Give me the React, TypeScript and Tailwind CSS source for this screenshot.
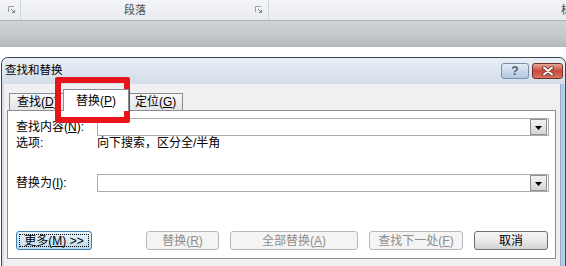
import type { ReactNode } from 'react';

function K({ children }: { children: ReactNode }) {
  return <span className="underline underline-offset-1">{children}</span>;
}

function Launcher() {
  return (
    <svg width="8" height="8" viewBox="0 0 8 8" className="block">
      <path d="M0.5 6V0.5H6" fill="none" stroke="#9a9ea3" />
      <path d="M3 3L6.5 6.5M4 6.5H6.5V4" fill="none" stroke="#7d8186" />
    </svg>
  );
}

function Combo() {
  return (
    <div className="flex-1 h-[18px] border border-[#a9abb0] bg-white flex justify-end items-center pr-px">
      <div className="w-[17px] h-[16px] border border-[#8e8f92] bg-gradient-to-b from-[#f3f3f3] to-[#d6d6d6] flex items-center justify-center">
        <svg width="7" height="4" viewBox="0 0 7 4" className="mt-[2px]">
          <path d="M0 0H7L3.5 4Z" fill="#000" />
        </svg>
      </div>
    </div>
  );
}

function Btn({
  w,
  ml = '',
  disabled,
  children,
}: {
  w: string;
  ml?: string;
  disabled?: boolean;
  children: ReactNode;
}) {
  return (
    <div
      className={`${w} ${ml} h-[19px] rounded-[3px] border flex items-center justify-center text-[12px] leading-none ${
        disabled
          ? 'border-[#b5b9bc] bg-[#f4f4f4] text-[#8d8d8d]'
          : 'border-[#707070] bg-gradient-to-b from-[#f6f6f6] via-[#e9e9e9] to-[#d3d3d3] text-black'
      }`}
    >
      {children}
    </div>
  );
}

export default function App() {
  return (
    <div className="w-[566px] h-[266px] overflow-hidden relative bg-white font-['Liberation_Sans','Noto_Sans_CJK_SC',sans-serif] text-[12px] text-black">
      {/* ribbon strip */}
      <div className="h-[21px] flex bg-gradient-to-b from-[#f3f5f8] to-[#e8ebef] border-b border-[#b1b5ba]">
        <div className="w-[21px] border-r border-[#d2d5d9] pl-[8px] pt-[6px]">
          <Launcher />
        </div>
        <div className="w-[248px] border-r border-[#d2d5d9] flex items-center pl-[103px] pr-[5px] text-[11px] text-[#4c4c4c]">
          <span className="flex-1">段落</span>
          <Launcher />
        </div>
        <div className="flex-1 overflow-hidden pl-[292px] text-[11px] text-[#4c4c4c] leading-[20px] whitespace-nowrap">
          标
        </div>
      </div>
      <div className="h-[26px] bg-gradient-to-b from-[#ced2d7] via-[#c6cacf] to-[#b4b8bd]" />
      <div className="h-[10px]" />

      {/* dialog */}
      <div className="ml-px w-[565px] h-[209px] border border-b-0 border-[#3d4753] rounded-t-[7px] bg-[#d6e1ec] flex flex-col overflow-hidden">
        <div className="h-[26px] flex items-start pl-[3px] pr-[2px] bg-gradient-to-b from-[#e8eef5] to-[#d3dee9]">
          <span className="flex-1 text-[11.5px] leading-[24px] text-black">查找和替换</span>
          <div className="mt-[5px] w-[28px] h-[16px] rounded-[3px] border border-[#7b8ea4] bg-gradient-to-b from-[#e4edf6] via-[#c9d9ea] to-[#b3c8de] flex items-center justify-center text-[12px] font-bold text-[#4b5d73] leading-none">
            ?
          </div>
          <div className="mt-[5px] ml-[3px] w-[31px] h-[16px] rounded-[3px] border border-[#6f2f26] bg-gradient-to-b from-[#e9a898] via-[#c8493a] to-[#d7735f] flex items-center justify-center">
            <svg width="12" height="10" viewBox="0 0 12 10">
              <path d="M2 1.5L10 8.5M10 1.5L2 8.5" stroke="#5a2a22" strokeWidth="3.6" strokeLinecap="round" />
              <path d="M2 1.5L10 8.5M10 1.5L2 8.5" stroke="#fff" strokeWidth="2" strokeLinecap="round" />
            </svg>
          </div>
        </div>

        <div className="flex-1 flex">
          <div className="w-[2px] bg-[#d3deea]" />
          <div className="flex-1 bg-[#f0f0f0] pl-[3px] pr-[4px] pt-[5px]">
            {/* tabs */}
            <div className="h-[21px] flex items-end pl-[2px]">
              <div className="w-[56px] h-[17px] border border-b-0 border-[#898c95] bg-gradient-to-b from-[#f7f7f7] to-[#e5e5e5] pl-[7px] leading-[16px] whitespace-nowrap overflow-hidden">
                查找(<K>D</K>)
              </div>
              <div className="relative z-10 -ml-[2px] -mb-px w-[66px] h-[22px] border border-b-0 border-[#898c95] bg-white flex items-center justify-center">
                替换(<K>P</K>)
              </div>
              <div className="-ml-[2px] w-[56px] h-[17px] border border-b-0 border-[#898c95] bg-gradient-to-b from-[#f7f7f7] to-[#e5e5e5] pl-[7px] leading-[16px] whitespace-nowrap">
                定位(<K>G</K>)
              </div>
            </div>

            {/* panel */}
            <div className="h-[149px] border border-[#898c95] bg-white pt-[7px] pl-[8px] pr-[6px]">
              <div className="h-[18px] flex items-center">
                <span className="w-[81px] whitespace-nowrap">
                  查找内容(<K>N</K>):
                </span>
                <Combo />
              </div>
              <div className="h-[14px] flex items-center">
                <span className="w-[81px]">选项:</span>
                <span>向下搜索，区分全/半角</span>
              </div>
              <div className="mt-[24px] h-[18px] flex items-center">
                <span className="w-[81px] whitespace-nowrap">
                  替换为(<K>I</K>):
                </span>
                <Combo />
              </div>
              <div className="mt-[39px] flex">
                <div className="w-[76px] h-[19px] rounded-[3px] border border-[#3c7fb1] bg-gradient-to-b from-[#e9f4fb] via-[#d5e8f5] to-[#b9d9ef] p-[2px]">
                  <div className="h-full border border-dotted border-black flex items-center justify-center leading-none">
                    更多(<K>M</K>) &gt;&gt;
                  </div>
                </div>
                <Btn w="w-[73px]" ml="ml-[54px]" disabled>
                  替换(<K>R</K>)
                </Btn>
                <Btn w="w-[128px]" ml="ml-[11px]" disabled>
                  全部替换(<K>A</K>)
                </Btn>
                <Btn w="w-[94px]" ml="ml-[11px]" disabled>
                  查找下一处(<K>F</K>)
                </Btn>
                <Btn w="w-[74px]" ml="ml-[11px]">
                  取消
                </Btn>
              </div>
            </div>
          </div>
          <div className="w-[5px] border-l border-[#9aa6b2] bg-gradient-to-r from-[#c9ddef] via-[#8ec7ea] to-[#cfe2f3]" />
        </div>
      </div>

      {/* red highlight annotation */}
      <div className="absolute left-[55px] top-[77px] w-[75px] h-[46px] border-[6px] border-[#e8141c] rounded-[2px]" />
    </div>
  );
}
